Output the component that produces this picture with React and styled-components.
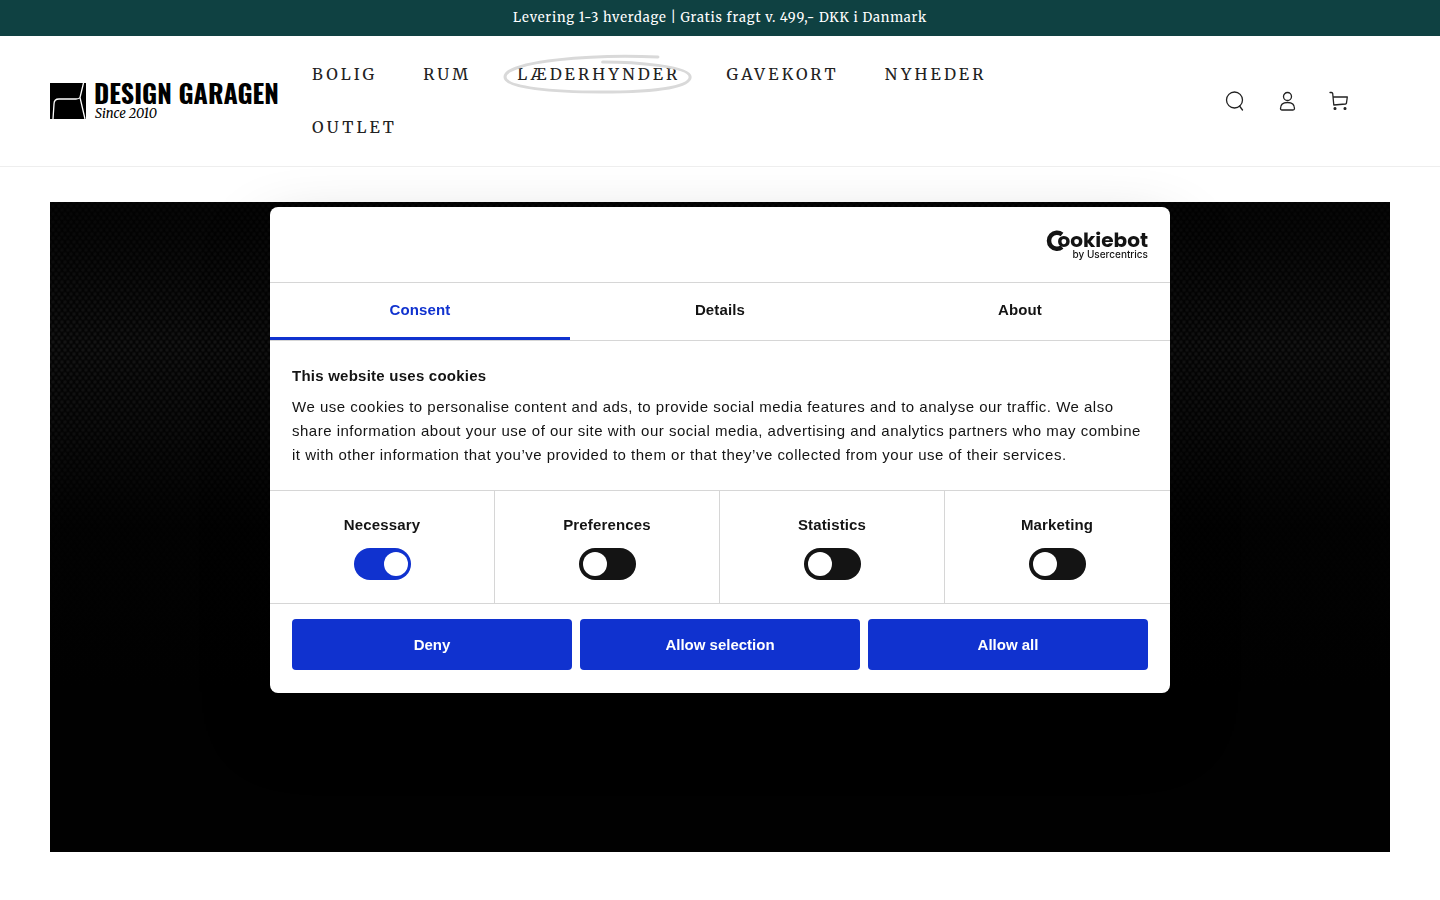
import React, { useState } from 'react'

import styled, { createGlobalStyle } from 'styled-components'

const GlobalStyle = createGlobalStyle`
    *,
    *::before,
    *::after {
        box-sizing: border-box;
    }
    body {
        margin: 0;
        background-color: #ffffff;
        color: #222222;
        font-family: Merriweather, 'DejaVu Serif Condensed', 'DejaVu Serif', serif;
    }
`
const Announcement = styled.div`
    display: flex;
    align-items: center;
    justify-content: center;
    height: 36px;
    padding-bottom: 2px;
    background-color: #0f4142;
    color: #ffffff;
    font-size: 13px;
    letter-spacing: 0.06em;
`
const Header = styled.header`
    display: flex;
    align-items: center;
    padding: 12px 75px 12px 50px;
    border-bottom: 1px solid #eeeeee;
`
const LogoLink = styled.a`
    display: block;
    flex: none;
    width: 228px;
    height: 38px;
    margin-right: 11px;
    color: #000000;

    svg {
        display: block;
        overflow: visible;
    }
`
const Nav = styled.nav`
    flex: 1;
    max-width: 760px;
`
const NavList = styled.ul`
    display: flex;
    flex-wrap: wrap;
    margin: 0;
    padding: 0;
    list-style: none;
`
const NavLink = styled.a`
    position: relative;
    display: block;
    padding: 0 23px;
    color: #222222;
    font-size: 16px;
    line-height: 53px;
    letter-spacing: 0.2em;
    text-decoration: none;
`
const Circle = styled.svg`
    position: absolute;
    top: 6px;
    left: 9px;
    width: calc(100% - 20px);
    height: 40px;
    fill: none;
    stroke: #d9d9d9;
    stroke-width: 3;
    stroke-linecap: round;
    pointer-events: none;
`
const Actions = styled.div`
    display: flex;
    margin-left: auto;
`
const IconButton = styled.button`
    display: flex;
    align-items: center;
    justify-content: center;
    width: 52px;
    height: 44px;
    padding: 0;
    border: 0;
    background: none;
    color: #222222;
    cursor: pointer;

    svg {
        width: 20px;
        height: 20px;
        fill: none;
        stroke: currentColor;
        stroke-width: 1.3;
        stroke-linecap: round;
        stroke-linejoin: round;
    }
`
const Main = styled.main`
    padding: 35px 50px 48px;
`
const Hero = styled.section`
    height: 650px;
    background-color: #010101;
    background-image: linear-gradient(
            rgba(1, 1, 1, 0.7) 0%,
            rgba(1, 1, 1, 0) 22%,
            rgba(1, 1, 1, 0.3) 35%,
            rgba(1, 1, 1, 0.9) 50%,
            #010101 75%
        ),
        radial-gradient(circle at 50% 50%, #1a1a1a 0, rgba(26, 26, 26, 0) 3px),
        radial-gradient(circle at 50% 50%, #1a1a1a 0, rgba(26, 26, 26, 0) 3px);
    background-size: 100% 100%, 6px 8px, 6px 8px;
    background-position: 0 0, 0 0, 3px 4px;
`
const Dialog = styled.div`
    position: fixed;
    top: 50%;
    left: 50%;
    width: 900px;
    max-width: calc(100% - 32px);
    transform: translate(-50%, -50%);
    border-radius: 8px;
    background-color: #ffffff;
    box-shadow: 0 32px 68px rgba(0, 0, 0, 0.3);
    color: #141414;
    font-family: 'Liberation Sans', Arial, sans-serif;
    font-size: 15px;
    overflow: hidden;
`
const DialogHeader = styled.div`
    display: flex;
    align-items: center;
    justify-content: flex-end;
    height: 76px;
    padding: 0 22px;
    border-bottom: 1px solid #d6d6d6;
`
const Tabs = styled.div`
    display: flex;
    border-bottom: 1px solid #d6d6d6;
`
const Tab = styled.button`
    flex: 1;
    height: 57px;
    padding: 0 0 4px;
    border: 0;
    background: none;
    box-shadow: ${(props) => (props.$active ? 'inset 0 -3px #1032cf' : 'none')};
    color: ${(props) => (props.$active ? '#1032cf' : '#141414')};
    font: bold 15px 'Liberation Sans', Arial, sans-serif;
    letter-spacing: 0.01em;
    cursor: pointer;
`
const Body = styled.div`
    padding: 23px 22px;
    border-bottom: 1px solid #d6d6d6;
    line-height: 24px;
    letter-spacing: 0.033em;
`
const Title = styled.h2`
    margin: 0 0 7px;
    font-size: 15px;
    line-height: 24px;
    letter-spacing: 0.016em;
`
const Text = styled.p`
    margin: 0;
`
const Consents = styled.div`
    display: grid;
    grid-template-columns: repeat(4, 1fr);
    border-bottom: 1px solid #d6d6d6;
`
const Consent = styled.label`
    display: flex;
    flex-direction: column;
    align-items: center;
    gap: 11px;
    padding: 22px 0 23px;
    border-right: 1px solid #d6d6d6;
    font-weight: bold;
    line-height: 24px;
    letter-spacing: 0.01em;

    &:last-child {
        border-right-color: transparent;
    }
`
const Switch = styled.input`
    display: flex;
    align-items: center;
    width: 57px;
    height: 32px;
    margin: 0;
    padding: 0 4px;
    appearance: none;
    border-radius: 16px;
    background-color: #141414;
    cursor: pointer;

    &::before {
        content: '';
        width: 24px;
        height: 24px;
        border-radius: 50%;
        background-color: #ffffff;
    }
    &:checked {
        justify-content: flex-end;
        padding: 0 3px;
        background-color: #1032cf;
    }
`
const Footer = styled.div`
    display: flex;
    gap: 8px;
    padding: 15px 22px 23px;
`
const Button = styled.button`
    flex: 1;
    height: 51px;
    padding: 0;
    border: 0;
    border-radius: 4px;
    background-color: #1032cf;
    color: #ffffff;
    font: bold 15px 'Liberation Sans', Arial, sans-serif;
    cursor: pointer;
`

const navItems = ['Bolig', 'Rum', 'Læderhynder', 'Gavekort', 'Nyheder', 'Outlet']
const tabs = ['Consent', 'Details', 'About']
const consents = ['Necessary', 'Preferences', 'Statistics', 'Marketing']

const Logo = () => (
    <svg width="228" height="38" viewBox="0 0 228 38" role="img" aria-label="Design Garagen">
        <path d="M0 1h36v36H0z" />
        <path
            d="M33.500 1L30 15.500L35 37M30 15.500Q29 17 26 17H9Q4 17 4 22L3 37"
            fill="none"
            stroke="#ffffff"
            strokeWidth="1.3"
        />
        <text
            x="44"
            y="22"
            fontFamily="Oswald, 'Liberation Sans Narrow', 'Liberation Sans', sans-serif"
            fontSize="26"
            fontWeight="700"
        >
            DESIGN GARAGEN
        </text>
        <text
            x="45"
            y="36"
            fontFamily="Merriweather, 'DejaVu Serif Condensed', 'DejaVu Serif', serif"
            fontSize="13"
            fontStyle="italic"
        >
            Since 2010
        </text>
    </svg>
)

const CookiebotLogo = () => (
    <svg width="104" height="40" viewBox="0 -4 104 40" role="img" aria-label="Cookiebot">
        <path
            d="M18 5.500A8 8 0 1 0 18 18"
            fill="none"
            stroke="#141414"
            strokeWidth="4.500"
        />
        <text
            x="104"
            y="18"
            textAnchor="end"
            fontFamily="Poppins, Inter, sans-serif"
            fontSize="20"
            fontWeight="700"
            fill="#141414"
        >
            ookiebot
        </text>
        <text
            x="104"
            y="29"
            textAnchor="end"
            fontFamily="Inter, sans-serif"
            fontSize="10"
            fontWeight="500"
            fill="#141414"
        >
            by Usercentrics
        </text>
    </svg>
)

function App() {
    const [activeTab, setActiveTab] = useState('Consent')

    return (
        <>
            <GlobalStyle />
            <Announcement>Levering 1-3 hverdage | Gratis fragt v. 499,- DKK i Danmark</Announcement>
            <Header>
                <LogoLink href="#">
                    <Logo />
                </LogoLink>
                <Nav>
                    <NavList>
                        {navItems.map((item) => (
                            <li key={item}>
                                <NavLink href="#">
                                    {item.toUpperCase()}
                                    {item === 'Læderhynder' && (
                                        <Circle viewBox="0 0 188 40" preserveAspectRatio="none">
                                            <path d="M154 3C90 0 2 7 2 23C2 34 50 38 98 38C146 38 186 34 186 23C186 12 130 8 99 8" />
                                        </Circle>
                                    )}
                                </NavLink>
                            </li>
                        ))}
                    </NavList>
                </Nav>
                <Actions>
                    <IconButton aria-label="Søg">
                        <svg viewBox="0 0 20 20">
                            <circle cx="9.500" cy="9" r="8" />
                            <path d="M14.500 15L17.500 19" />
                        </svg>
                    </IconButton>
                    <IconButton aria-label="Log ind">
                        <svg viewBox="0 0 20 20">
                            <circle cx="10.500" cy="5.500" r="4" />
                            <path d="M3.500 17.500C3.500 13.500 6.500 11.500 10.500 11.500S17.500 13.500 17.500 17.500Q17.500 19 16 19H5Q3.500 19 3.500 17.500Z" />
                        </svg>
                    </IconButton>
                    <IconButton aria-label="Indkøbskurv">
                        <svg viewBox="0 0 20 20">
                            <path d="M1 1.500H2.500Q3.500 1.500 3.700 2.500L4.800 14L16.500 13Q17.300 12.900 17.500 12L18.300 6H4.200" />
                            <circle cx="6" cy="17.500" r="0.900" fill="currentColor" />
                            <circle cx="16" cy="17.500" r="0.900" fill="currentColor" />
                        </svg>
                    </IconButton>
                </Actions>
            </Header>
            <Main>
                <Hero />
            </Main>
            <Dialog role="dialog" aria-labelledby="cookie-title">
                <DialogHeader>
                    <CookiebotLogo />
                </DialogHeader>
                <Tabs role="tablist">
                    {tabs.map((tab) => (
                        <Tab
                            key={tab}
                            role="tab"
                            aria-selected={activeTab === tab}
                            $active={activeTab === tab}
                            onClick={() => setActiveTab(tab)}
                        >
                            {tab}
                        </Tab>
                    ))}
                </Tabs>
                <Body>
                    <Title id="cookie-title">This website uses cookies</Title>
                    <Text>
                        We use cookies to personalise content and ads, to provide social media
                        features and to analyse our traffic. We also share information about your
                        use of our site with our social media, advertising and analytics partners
                        who may combine it with other information that you’ve provided to them or
                        that they’ve collected from your use of their services.
                    </Text>
                </Body>
                <Consents>
                    {consents.map((name) => (
                        <Consent key={name}>
                            {name}
                            <Switch type="checkbox" defaultChecked={name === 'Necessary'} />
                        </Consent>
                    ))}
                </Consents>
                <Footer>
                    <Button>Deny</Button>
                    <Button>Allow selection</Button>
                    <Button>Allow all</Button>
                </Footer>
            </Dialog>
        </>
    )
}

export default App
